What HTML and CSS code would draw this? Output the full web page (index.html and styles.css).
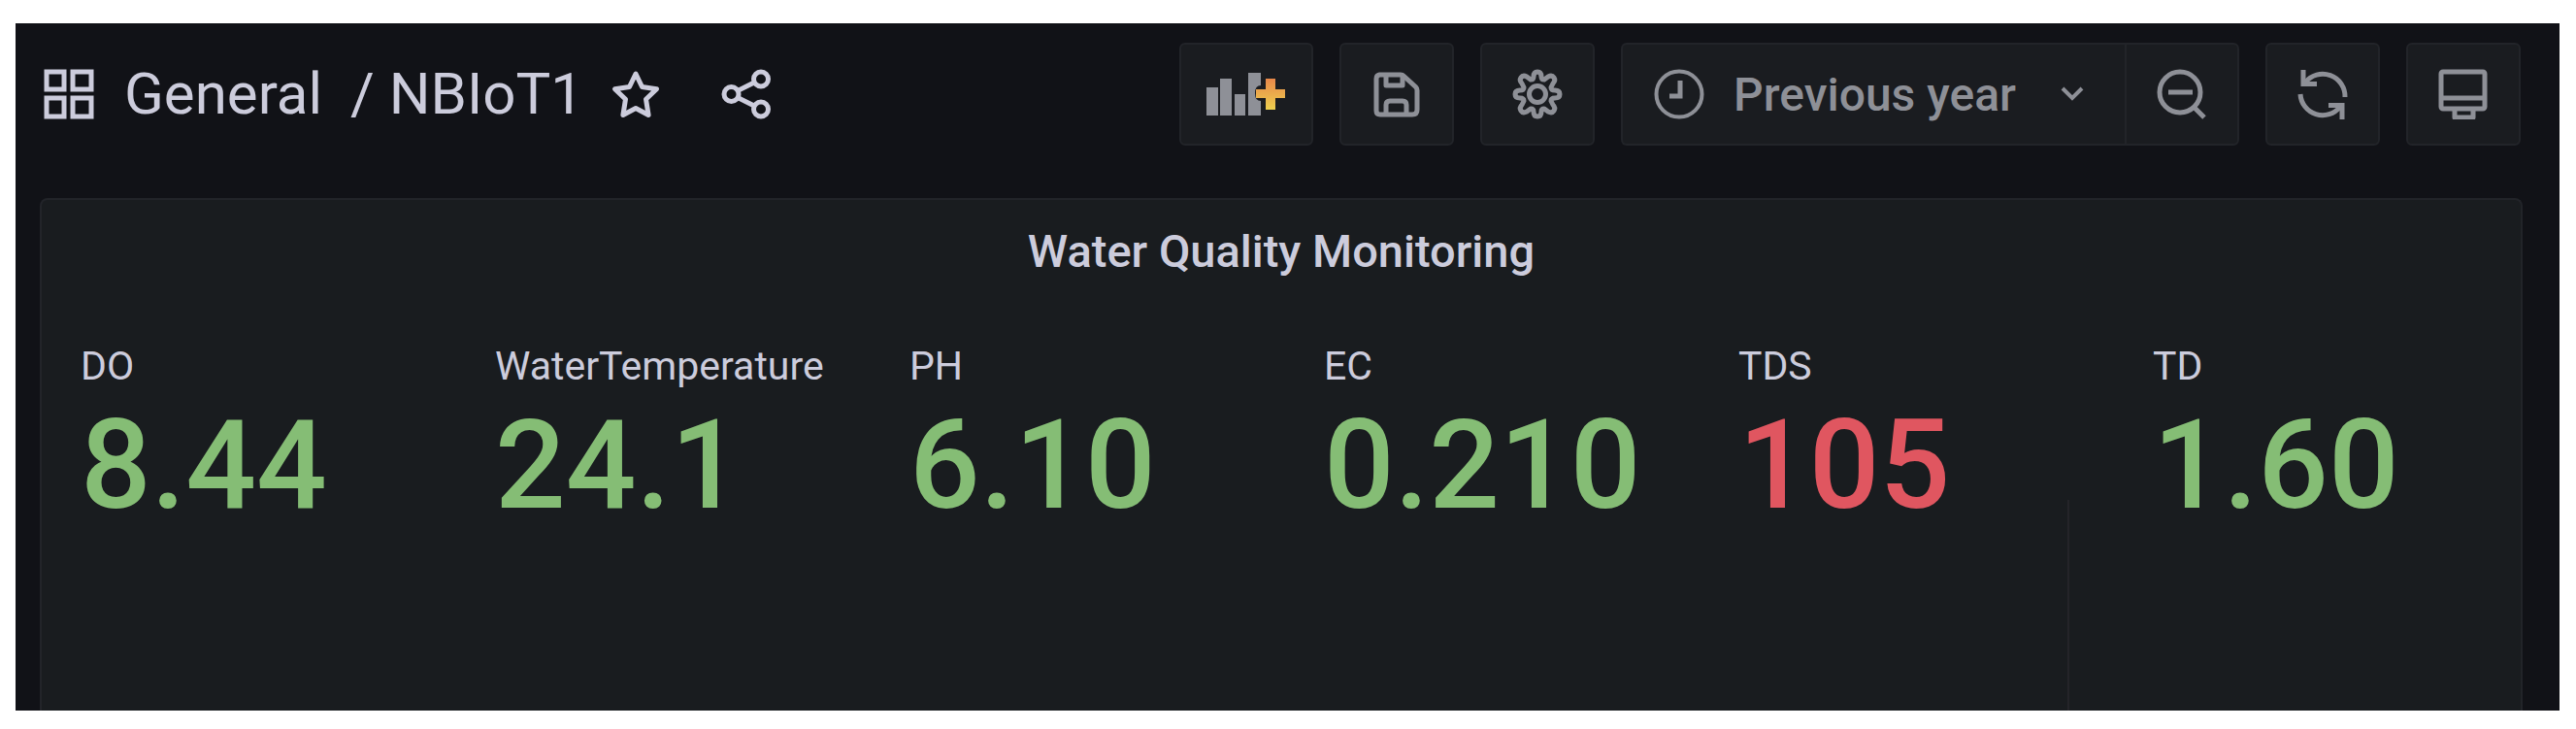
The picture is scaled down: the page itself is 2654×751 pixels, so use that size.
FILE: index.html
```html
<!DOCTYPE html>
<html lang="en">
<head>
<meta charset="utf-8">
<title>General / NBIoT1</title>
<link rel="stylesheet" href="styles.css">
</head>
<body>
<div class="app">
  <header class="toolbar">
    <nav class="crumbs" aria-label="Breadcrumb">
      <svg class="icon icon-apps" viewBox="0 0 52 52" fill="none" stroke="currentColor" stroke-width="5"><path d="M3 3h18v18H3zM30 3h19v18H30zM3 30h18v19H3zM30 30h19v19H30z"/></svg>
      <a class="crumb crumb-folder" href="#general">General</a>
      <span class="crumb crumb-sep">/</span>
      <a class="crumb" href="#nbiot1">NBIoT1</a>
      <button class="plain" type="button" aria-label="Mark as favorite"><svg class="icon" viewBox="0 0 52 52" fill="none" stroke="currentColor" stroke-width="5" stroke-linejoin="round"><path d="M26 5l6.500 13.500 15 2.200-11 10.500 2.600 16.300L26 40.500 12.900 47.500l2.600-16.300-11-10.500 15-2.200z"/></svg></button>
      <button class="plain plain-share" type="button" aria-label="Share dashboard"><svg class="icon" viewBox="0 0 52 52" fill="none" stroke="currentColor" stroke-width="5"><circle cx="10.500" cy="26" r="7.500"/><circle cx="41" cy="10.500" r="7.500"/><circle cx="41" cy="41.500" r="7.500"/><path d="M17 22.500l17-8.500M17 29.500l17 8.500"/></svg></button>
    </nav>
    <div class="actions">
      <button class="btn btn-wide" type="button" aria-label="Add panel"><svg class="icon-add" viewBox="0 0 82 46"><defs><linearGradient id="plus" x1="0" y1="0" x2="0" y2="1"><stop offset="0" stop-color="#e8884a"/><stop offset="1" stop-color="#edcf4e"/></linearGradient></defs><path fill="#8e9097" d="M0 16h12v29H0zM14 7h12v38H14zM29 23h11v22H29zM43 1h13v13q-6 0-6 8t6 8v15H43z"/><path fill="url(#plus)" d="M61 7h10v11h10v9H71v12H61V27H51v-9h10z"/></svg></button>
      <button class="btn" type="button" aria-label="Save dashboard"><svg class="icon" viewBox="0 0 52 52" fill="none" stroke="currentColor" stroke-width="5" stroke-linejoin="round"><path d="M8 6h22q2 0 3.500 1.500l12 11Q47 20 47 22v20q0 5-5 5H9q-4 0-4-4V10q0-4 4-4z"/><path d="M15 6v11h17V6M15 46V37q0-4 4-4h13q4 0 4 4v9"/></svg></button>
      <button class="btn" type="button" aria-label="Dashboard settings"><svg class="icon" viewBox="0 0 52 52" fill="none" stroke="currentColor" stroke-width="5" stroke-linejoin="round"><path d="M22 8q0-5 4-5t4 5q0 3 3 3l4-3q4-2 6 1t-1 6l-2 4q0 3 4 3 5 0 5 4t-5 4q-4 0-4 3l2 4q3 3 1 6t-6 1l-4-3q-3 0-3 3 0 5-4 5t-4-5q0-3-3-3l-4 3q-4 2-6-1t1-6l2-4q0-3-4-3-5 0-5-4t5-4q4 0 4-3l-2-4q-3-3-1-6t6-1l4 3q3 0 3-3z"/><circle cx="26" cy="26" r="8.500"/></svg></button>
      <div class="group">
        <button class="btn btn-range" type="button"><svg class="icon" viewBox="0 0 52 52" fill="none" stroke="currentColor" stroke-width="4"><circle cx="26" cy="26" r="23.500"/><path d="M27 12v16H16" stroke-width="5"/></svg><span>Previous year</span><svg class="icon-chevron" viewBox="0 0 24 16" fill="none" stroke="currentColor" stroke-width="4"><path d="M2 2l10 10L22 2"/></svg></button>
        <button class="btn btn-zoom" type="button" aria-label="Zoom out time range"><svg class="icon" viewBox="0 0 52 52" fill="none" stroke="currentColor" stroke-width="5"><circle cx="24" cy="24" r="21"/><path d="M12 24h25M38 39l11 11"/></svg></button>
      </div>
      <button class="btn" type="button" aria-label="Refresh dashboard"><svg class="icon" viewBox="0 0 52 52" fill="none" stroke="currentColor" stroke-width="5"><path d="M49 29A23 23 0 0 0 8 14M3 26a23 23 0 0 0 41 13"/><path d="M6 1v14.500h14M32 37.500h14V52"/></svg></button>
      <button class="btn" type="button" aria-label="Cycle view mode"><svg class="icon" viewBox="0 0 52 52" fill="none" stroke="currentColor" stroke-width="5" stroke-linejoin="round"><rect x="3" y="3" width="45" height="38" rx="2"/><path d="M3 30h45M17 41v9h19v-9"/></svg></button>
    </div>
  </header>
  <main class="panel">
    <h1 class="panel-title">Water Quality Monitoring</h1>
    <dl class="stats">
      <div class="stat"><dt>DO</dt><dd>8.44</dd></div>
      <div class="stat"><dt>WaterTemperature</dt><dd>24.1</dd></div>
      <div class="stat"><dt>PH</dt><dd>6.10</dd></div>
      <div class="stat"><dt>EC</dt><dd>0.210</dd></div>
      <div class="stat stat-alert"><dt>TDS</dt><dd>105</dd></div>
      <div class="stat"><dt>TD</dt><dd>1.60</dd></div>
    </dl>
  </main>
</div>
</body>
</html>
```
FILE: styles.css
```css
* { box-sizing: border-box; }

body {
  margin: 0;
  min-height: 100vh;
  padding: 24px 17px 19px 16px;
  display: flex;
  background: #fff;
  font-family: Roboto, "Liberation Sans", sans-serif;
  color: #ccccdc;
}

.app {
  flex: 1;
  min-width: 0;
  display: flex;
  flex-direction: column;
  gap: 54px;
  padding: 20px 38px 0 25px;
  background: #111217;
}

.toolbar {
  display: flex;
  justify-content: space-between;
  align-items: center;
  padding-right: 2px;
}

.crumbs {
  display: flex;
  align-items: center;
  padding-left: 4px;
}

.crumb {
  font-size: 60px;
  line-height: 72px;
  color: inherit;
  text-decoration: none;
}

.crumb-folder { margin-left: 31px; }
.crumb-sep { margin: 0 15px 0 29px; }

button {
  margin: 0;
  padding: 0;
  border: 0;
  background: none;
  color: inherit;
  font: inherit;
}

.icon {
  display: block;
  flex: none;
  width: 52px;
  height: 52px;
}

.plain { margin-left: 28px; }
.plain-share { margin-left: 62px; }

.actions {
  display: flex;
  gap: 27px;
  color: #8e9097;
}

.btn {
  display: flex;
  align-items: center;
  justify-content: center;
  width: 118px;
  height: 106px;
  border: 2px solid #222429;
  border-radius: 6px;
  background: #1a1c20;
}

.btn-wide { width: 138px; }

.group { display: flex; }

.btn-range {
  width: auto;
  gap: 30px;
  padding: 0 42px 0 32px;
  border-right: 0;
  border-radius: 6px 0 0 6px;
  font-size: 48px;
  font-weight: 500;
}

.btn-zoom { border-radius: 0 6px 6px 0; }

.icon-add {
  width: 82px;
  height: 46px;
}

.icon-chevron {
  width: 24px;
  height: 16px;
  margin-left: 16px;
}

.panel {
  position: relative;
  flex: 1;
  padding: 26px 0 0 40px;
  border: 2px solid #222429;
  border-bottom: 0;
  border-radius: 8px 8px 0 0;
  background: #191c1f;
}

/* Faint rule between the last two readings */
.panel::after {
  content: "";
  position: absolute;
  top: 309px;
  bottom: 0;
  right: 18.2%;
  width: 2px;
  background: #242429;
}

.panel-title {
  margin: 0 40px 0 0;
  text-align: center;
  font-size: 47px;
  line-height: 54px;
  font-weight: 500;
}

.stats {
  display: grid;
  grid-template-columns: repeat(6, 1fr);
  gap: 48px;
  margin: 66px 0 0;
}

.stat { min-width: 0; }

.stat dt {
  font-size: 41px;
  line-height: 50px;
}

.stat dd {
  margin: 0;
  font-size: 128px;
  line-height: 154px;
  font-weight: 500;
  color: #85bd75;
}

.stat-alert dd { color: #e05660; }
```
